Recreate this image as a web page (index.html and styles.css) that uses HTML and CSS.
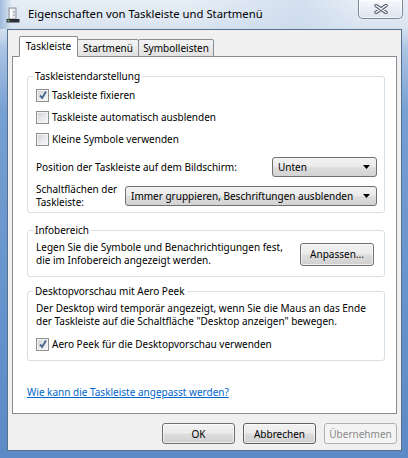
FILE: index.html
```html
<!DOCTYPE html>
<html lang="de">
<head>
    <meta charset="UTF-8">
    <title>Eigenschaften von Taskleiste und Startmenü</title>
    <link rel="stylesheet" href="styles.css">
</head>
<body>
    <div class="window">
        <!-- Title bar -->
        <div class="titlebar">
            <svg class="app-icon" width="14" height="16" viewBox="0 0 14 16">
                <rect x="3" y="1" width="7" height="11" fill="#e9ebee" stroke="#8a8f96" stroke-width="1"/>
                <rect x="4" y="2" width="2" height="9" fill="#ffffff"/>
                <rect x="7" y="4" width="2" height="2" fill="#b9bec5"/>
                <rect x="7" y="7" width="2" height="2" fill="#b9bec5"/>
                <rect x="0.5" y="12" width="13" height="3.5" fill="#2b2f35"/>
                <rect x="1.5" y="13" width="2" height="1.5" fill="#7ac06a"/>
            </svg>
            <span class="title">Eigenschaften von Taskleiste und Startmenü</span>
            <div class="close">
                <svg width="14" height="10" viewBox="0 0 14 10">
                    <path d="M2 1.5 L12 8.5 M12 1.5 L2 8.5" stroke="#56606c" stroke-width="3.4" stroke-linecap="round"/>
                    <path d="M2 1.5 L12 8.5 M12 1.5 L2 8.5" stroke="#ffffff" stroke-width="1.4" stroke-linecap="round"/>
                </svg>
            </div>
        </div>

        <div class="client">
            <!-- Tabs -->
            <div class="tabs">
                <div class="tab active tab-taskbar">Taskleiste</div>
                <div class="tab tab-start">Startmenü</div>
                <div class="tab tab-toolbars">Symbolleisten</div>
            </div>

            <div class="panel">
                <fieldset class="group group-display">
                    <legend>Taskleistendarstellung</legend>
                    <div class="check first"><span class="box checked"></span>Taskleiste fixieren</div>
                    <div class="check"><span class="box"></span>Taskleiste automatisch ausblenden</div>
                    <div class="check"><span class="box"></span>Kleine Symbole verwenden</div>

                    <div class="field-row position-row">
                        <span>Position der Taskleiste auf dem Bildschirm:</span>
                        <div class="combo combo-short"><span>Unten</span><i class="arrow"></i></div>
                    </div>
                    <div class="field-row buttons-row">
                        <span class="field-label">Schaltflächen der<br>Taskleiste:</span>
                        <div class="combo combo-wide"><span>Immer gruppieren, Beschriftungen ausblenden</span><i class="arrow"></i></div>
                    </div>
                </fieldset>

                <fieldset class="group group-info">
                    <legend>Infobereich</legend>
                    <div class="info-row">
                        <span class="lines">Legen Sie die Symbole und Benachrichtigungen fest,<br>die im Infobereich angezeigt werden.</span>
                        <button class="btn btn-customize">Anpassen...</button>
                    </div>
                </fieldset>

                <fieldset class="group group-peek">
                    <legend>Desktopvorschau mit Aero Peek</legend>
                    <p class="lines peek-text">Der Desktop wird temporär angezeigt, wenn Sie die Maus an das Ende<br>der Taskleiste auf die Schaltfläche "Desktop anzeigen" bewegen.</p>
                    <div class="check"><span class="box checked"></span>Aero Peek für die Desktopvorschau verwenden</div>
                </fieldset>

                <a class="help-link" href="#">Wie kann die Taskleiste angepasst werden?</a>
            </div>

            <!-- Dialog buttons -->
            <div class="actions">
                <button class="btn">OK</button>
                <button class="btn btn-focus">Abbrechen</button>
                <button class="btn" disabled>Übernehmen</button>
            </div>
        </div>
    </div>
</body>
</html>
```

FILE: styles.css
```css
body {
    margin: 0;
    font-family: "Noto Sans", "Open Sans", sans-serif;
    font-size: 10px;
    color: #000000;
}
.window {
    width: 408px;
    height: 458px;
    box-sizing: border-box;
    padding: 0 6px 7px 7px;
    display: flex;
    flex-direction: column;
    background: linear-gradient(180deg, #e6edf6 0px, #dbe5f1 26px, #a9c3e3 50px, #77a0d3 110px, #6593cc 300px, #5b8ac6 458px);
}
.titlebar {
    height: 29px;
    display: flex;
    align-items: flex-start;
    margin: 0 -6px 0 -7px;
    padding-left: 6px;
    background: linear-gradient(90deg, rgba(110, 150, 200, 0.55) 0px, rgba(230, 237, 246, 0) 12px, rgba(230, 237, 246, 0) 190px, rgba(190, 208, 230, 0.45) 300px, rgba(230, 237, 246, 0) 360px);
}
.app-icon {
    margin-top: 7px;
}
.title {
    margin: 6px 0 0 8px;
    font-size: 11.3px;
    line-height: 16px;
}
.close {
    margin-left: auto;
    margin-right: 5px;
    width: 45px;
    height: 19px;
    box-sizing: border-box;
    border: 1px solid #7b8696;
    border-top: none;
    border-radius: 0 0 5px 5px;
    background: linear-gradient(180deg, #f6f8fb 0%, #e9eef5 50%, #dde5ef 100%);
    box-shadow: inset 0 0 0 1px rgba(255, 255, 255, 0.7);
    display: flex;
    align-items: center;
    justify-content: center;
}
.client {
    flex: 1;
    display: flex;
    flex-direction: column;
    background-color: #f0f0f0;
    border: 1px solid #56708f;
    padding: 6px 4px 6px 4px;
}
.tabs {
    display: flex;
    align-items: flex-end;
    padding-left: 7px;
    margin-bottom: -1px;
    position: relative;
    z-index: 1;
}
.tab {
    box-sizing: border-box;
    height: 18px;
    line-height: 16px;
    text-align: center;
    border: 1px solid #898c95;
    border-radius: 2px 2px 0 0;
    margin-left: -1px;
    background: linear-gradient(180deg, #f3f3f3 0%, #ebebeb 50%, #e0e0e0 100%);
}
.tab.active {
    height: 21px;
    line-height: 19px;
    margin-left: 0;
    background: #ffffff;
    border-bottom-color: #ffffff;
    position: relative;
    z-index: 2;
}
.tab-taskbar {
    width: 59px;
}
.tab-start {
    width: 62px;
}
.tab-toolbars {
    width: 76px;
}
.panel {
    flex: 1;
    box-sizing: border-box;
    background-color: #ffffff;
    border: 1px solid #898c95;
    padding: 13px 11px 0 14px;
}
.group {
    margin: 0;
    min-width: 0;
    border: 1px solid #d5dfe5;
    border-radius: 3px;
    padding: 0 7px 0 8px;
}
.group legend {
    line-height: 13px;
    padding: 0 2px;
    margin-left: -3px;
}
.check {
    display: flex;
    align-items: center;
    height: 22px;
}
.check.first {
    margin-top: 1px;
}
.box {
    width: 13px;
    height: 13px;
    box-sizing: border-box;
    margin-right: 3px;
    border: 1px solid #8e8f8f;
    background: linear-gradient(135deg, #cdd1d6 0%, #e9eaec 55%, #f8f8f8 100%);
    box-shadow: inset 0 0 0 1px #f4f4f4;
    position: relative;
}
.box.checked::after {
    content: "";
    position: absolute;
    left: 2px;
    top: 0px;
    width: 8px;
    height: 10px;
    background: url("data:image/svg+xml;utf8,<svg xmlns='http://www.w3.org/2000/svg' width='8' height='10' viewBox='0 0 8 10'><path d='M1 5.5 L3.2 8 L7 1.5' fill='none' stroke='%234a6794' stroke-width='1.9'/></svg>") no-repeat;
}
.field-row {
    display: flex;
    align-items: center;
    justify-content: space-between;
}
.position-row {
    height: 20px;
    margin-top: 7px;
}
.buttons-row {
    height: 26px;
    margin-top: 6px;
    margin-bottom: 3px;
    line-height: 13px;
}
.combo {
    box-sizing: border-box;
    height: 20px;
    border: 1px solid #707070;
    border-radius: 3px;
    padding: 0 6px 0 5px;
    display: flex;
    align-items: center;
    justify-content: space-between;
    background: linear-gradient(180deg, #f2f2f2 0%, #ebebeb 45%, #dddddd 55%, #d3d3d3 100%);
}
.combo-short {
    width: 105px;
}
.combo-wide {
    width: 252px;
}
.arrow {
    width: 7px;
    height: 4px;
    background: #000000;
    clip-path: polygon(0 0, 100% 0, 50% 100%);
}
.group-info {
    margin-top: 11px;
}
.info-row {
    display: flex;
    align-items: center;
    justify-content: space-between;
    height: 26px;
    margin: 4px 0 9px;
}
.lines {
    line-height: 13px;
}
.btn {
    box-sizing: border-box;
    width: 73px;
    height: 21px;
    padding: 0;
    font-family: inherit;
    font-size: 10px;
    color: #000000;
    border: 1px solid #707070;
    border-radius: 3px;
    background: linear-gradient(180deg, #f2f2f2 0%, #ebebeb 45%, #dddddd 55%, #cfcfcf 100%);
    box-shadow: inset 0 0 0 1px rgba(255, 255, 255, 0.6);
}
.btn-customize {
    width: 74px;
    height: 23px;
    margin-right: 3px;
}
.btn-focus {
    border-color: #5f5f5f;
}
.btn:disabled {
    color: #8a8a8a;
    border-color: #adb2b5;
    background: #f4f4f4;
    box-shadow: none;
}
.group-peek {
    margin-top: 8px;
    padding-bottom: 5px;
}
.peek-text {
    margin: 4px 0 0;
}
.group-peek .check {
    margin-top: 5px;
}
.help-link {
    display: inline-block;
    margin-top: 25px;
    line-height: 13px;
    color: #0066cc;
}
.actions {
    display: flex;
    justify-content: flex-end;
    gap: 8px;
    margin-top: 9px;
    height: 21px;
}
```
